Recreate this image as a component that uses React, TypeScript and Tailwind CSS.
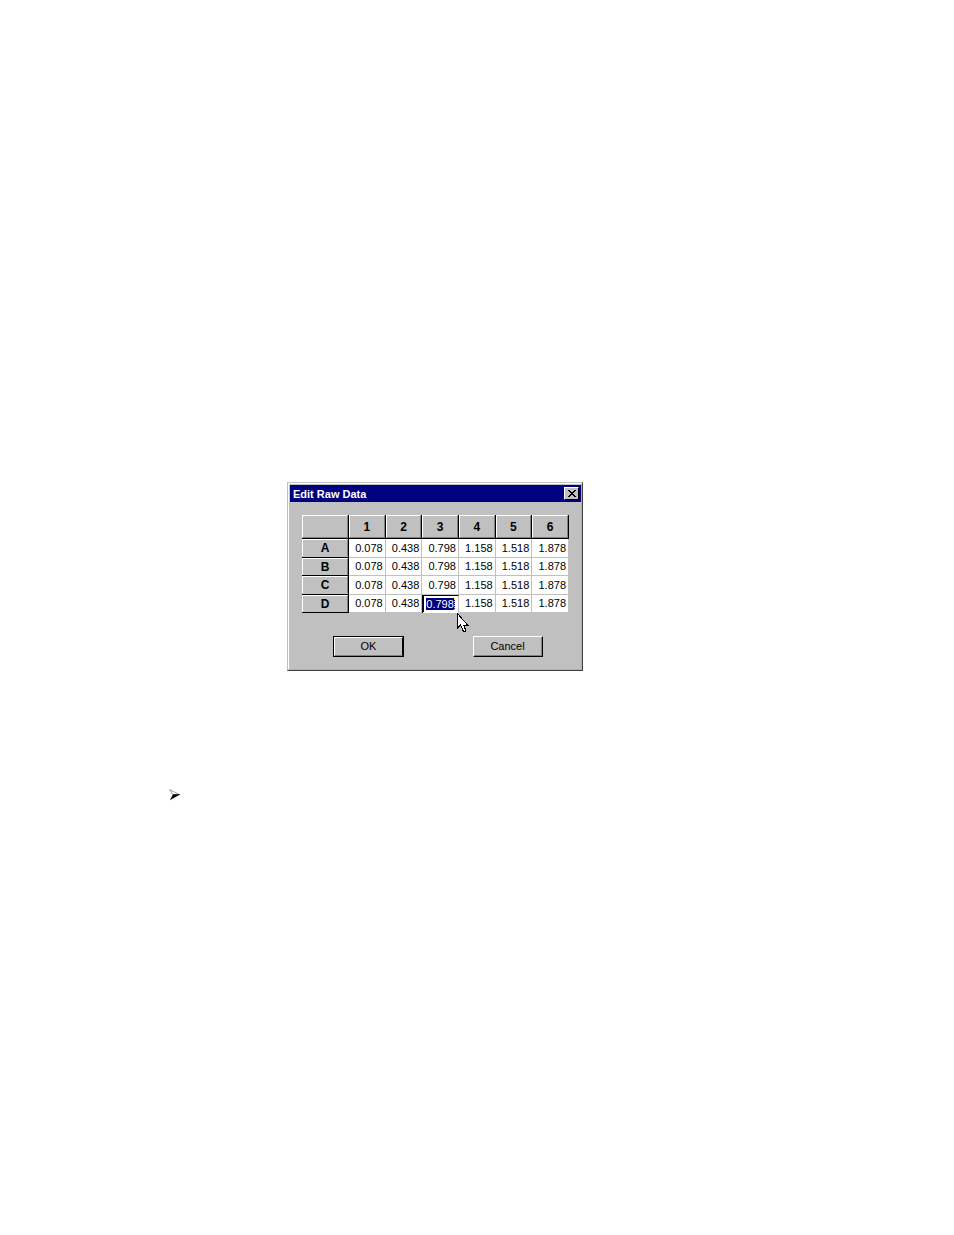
import { useState } from "react";

type Row = {
  label: string;
  values: string[];
};

const columns = ["1", "2", "3", "4", "5", "6"];

const initialRows: Row[] = ["A", "B", "C", "D"].map((label) => ({
  label,
  values: ["0.078", "0.438", "0.798", "1.158", "1.518", "1.878"],
}));

const ACTIVE_ROW = 3;
const ACTIVE_COLUMN = 2;

function CloseIcon() {
  return (
    <svg width="8" height="7" viewBox="0 0 8 7" shapeRendering="crispEdges">
      <path
        d="M0 0h2v1h1v1h2v-1h1v-1h2v1h-1v1h-1v1h-1v1h1v1h1v1h1v1h-2v-1h-1v-1h-2v1h-1v1h-2v-1h1v-1h1v-1h1v-1h-1v-1h-1v-1h-1z"
        fill="#000"
      />
    </svg>
  );
}

function Pointer() {
  return (
    <svg
      className="absolute left-full top-full z-10 -ml-px"
      width="12"
      height="20"
      viewBox="0 0 12 20"
      shapeRendering="crispEdges"
    >
      <path
        d="M.5 .5v14.500l3-3 3 6.500h2v-2l-2-4.500h4z"
        fill="#fff"
        stroke="#000"
      />
    </svg>
  );
}

function ArrowBullet() {
  return (
    <svg width="12" height="12" viewBox="0 0 12 12">
      <path d="M.7 .7l10 5H4z" fill="#fff" stroke="#777" strokeWidth=".7" />
      <path d="M4 5.300h7.500L.8 11.200z" fill="#000" />
    </svg>
  );
}

function DataGrid() {
  const [rows, setRows] = useState(initialRows);

  const updateActive = (value: string) => {
    setRows(
      rows.map((row, r) =>
        r === ACTIVE_ROW
          ? {
              ...row,
              values: row.values.map((v, c) => (c === ACTIVE_COLUMN ? value : v)),
            }
          : row
      )
    );
  };

  return (
    <table className="h-[98px] w-[267px] table-fixed border-separate border-spacing-0">
      <thead>
        <tr className="h-6">
          <td className="w-[47px] border-b border-r border-black p-0">
            <div className="h-[23px] border border-b-[#808080] border-l-white border-r-[#808080] border-t-white" />
          </td>
          {columns.map((c) => (
            <th key={c} scope="col" className="border-b border-r border-black p-0">
              <div className="h-[23px] border border-b-[#808080] border-l-white border-r-[#808080] border-t-white text-[12px] leading-[22px]">
                {c}
              </div>
            </th>
          ))}
        </tr>
      </thead>
      <tbody>
        {rows.map((row, r) => (
          <tr key={row.label}>
            <th
              scope="row"
              className="border-b border-r border-black p-0 text-[12px] leading-4"
            >
              <div className="border border-b-0 border-l-white border-r-[#808080] border-t-white">
                {row.label}
              </div>
            </th>
            {row.values.map((value, c) =>
              r === ACTIVE_ROW && c === ACTIVE_COLUMN ? (
                <td
                  key={c}
                  className="relative border-l border-r border-t border-black border-r-[#c0c0c0] bg-white p-0"
                >
                  <div className="flex h-4 items-center border-l border-black pl-[2px]">
                    <input
                      aria-label="D 3"
                      value={value}
                      onChange={(e) => updateActive(e.target.value)}
                      className="h-3 w-[29px] border-r border-dotted border-yellow-300 bg-[#000080] p-0 text-[11px] leading-3 text-white outline-none"
                    />
                  </div>
                  <Pointer />
                </td>
              ) : (
                <td
                  key={c}
                  className="border-b border-r border-[#c0c0c0] bg-white p-0 pr-[2px] text-right text-[11px] leading-4"
                >
                  {value}
                </td>
              )
            )}
          </tr>
        ))}
      </tbody>
    </table>
  );
}

function App() {
  return (
    <main className="flex flex-col items-start bg-white pt-[482px] font-['Liberation_Sans',sans-serif] text-black">
      <section
        role="dialog"
        aria-labelledby="dialog-title"
        className="ml-[287px] border border-[#404040] border-l-[#c0c0c0] border-t-[#c0c0c0] bg-[#c0c0c0]"
      >
        <div className="border border-[#b0b0b0] border-l-white border-t-white pl-px pt-px">
          <header className="flex h-[17px] items-center justify-between bg-[#000080] pl-[3px] pr-[2px]">
            <h1
              id="dialog-title"
              className="text-[11px] font-bold leading-4 text-white"
            >
              Edit Raw Data
            </h1>
            <button
              aria-label="Close"
              className="flex h-[13px] w-[15px] items-center justify-center border border-black border-l-white border-t-white bg-[#c0c0c0]"
            >
              <CloseIcon />
            </button>
          </header>
          <div className="px-3 pb-3 pt-[13px]">
            <DataGrid />
            <footer className="flex justify-between pl-[31px] pr-[26px] pt-[23px] text-[11px]">
              <button className="h-[21px] w-[71px] border border-black">
                <span className="block h-[19px] border border-b-[#808080] border-l-white border-r-black border-t-white leading-[17px]">
                  OK
                </span>
              </button>
              <button className="h-[21px] w-[70px] border border-black border-l-white border-t-white">
                <span className="block h-[19px] border-b border-r border-[#808080] leading-[18px]">
                  Cancel
                </span>
              </button>
            </footer>
          </div>
        </div>
      </section>
      <div className="ml-[169px] mt-[118px]">
        <ArrowBullet />
      </div>
    </main>
  );
}

export default App;
